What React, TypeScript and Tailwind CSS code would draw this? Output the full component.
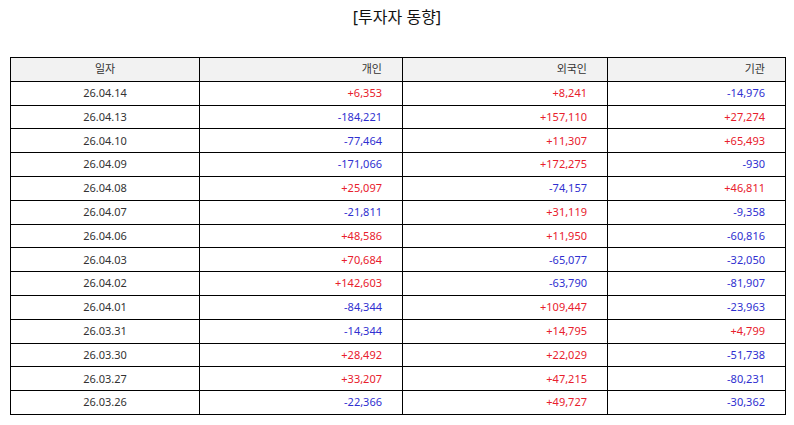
const rows: [string, string, string, string][] = [
  ["26.04.14", "+6,353", "+8,241", "-14,976"],
  ["26.04.13", "-184,221", "+157,110", "+27,274"],
  ["26.04.10", "-77,464", "+11,307", "+65,493"],
  ["26.04.09", "-171,066", "+172,275", "-930"],
  ["26.04.08", "+25,097", "-74,157", "+46,811"],
  ["26.04.07", "-21,811", "+31,119", "-9,358"],
  ["26.04.06", "+48,586", "+11,950", "-60,816"],
  ["26.04.03", "+70,684", "-65,077", "-32,050"],
  ["26.04.02", "+142,603", "-63,790", "-81,907"],
  ["26.04.01", "-84,344", "+109,447", "-23,963"],
  ["26.03.31", "-14,344", "+14,795", "+4,799"],
  ["26.03.30", "+28,492", "+22,029", "-51,738"],
  ["26.03.27", "+33,207", "+47,215", "-80,231"],
  ["26.03.26", "-22,366", "+49,727", "-30,362"],
];

function Num({ v }: { v: string }) {
  const color = v.startsWith("-") ? "text-[#3030d0]" : "text-[#e8202c]";
  return <td className={`border border-black pr-[20px] text-right ${color}`}>{v}</td>;
}

export default function App() {
  return (
    <div
      className="w-[794px] h-[425px] bg-white text-[#333]"
      style={{ fontFamily: '"Noto Sans", "Noto Sans CJK KR", sans-serif' }}
    >
      <h1 className="pt-[5px] text-center text-[16px] leading-[24px] text-[#111]">[투자자 동향]</h1>
      <div className="px-[10px] pt-[28px]">
        <table className="w-[775px] border-collapse border border-black text-[11px] table-fixed">
          <colgroup>
            <col className="w-[189px]" />
            <col className="w-[203px]" />
            <col className="w-[205px]" />
            <col className="w-[178px]" />
          </colgroup>
          <thead>
            <tr className="h-[23.8px] bg-[#f2f2f2]">
              <th className="border border-black font-normal text-center">일자</th>
              <th className="border border-black font-normal text-right pr-[20px]">개인</th>
              <th className="border border-black font-normal text-right pr-[20px]">외국인</th>
              <th className="border border-black font-normal text-right pr-[20px]">기관</th>
            </tr>
          </thead>
          <tbody>
            {rows.map((r) => (
              <tr key={r[0]} className="h-[23.8px]">
                <td className="border border-black text-center">{r[0]}</td>
                <Num v={r[1]} />
                <Num v={r[2]} />
                <Num v={r[3]} />
              </tr>
            ))}
          </tbody>
        </table>
      </div>
    </div>
  );
}
